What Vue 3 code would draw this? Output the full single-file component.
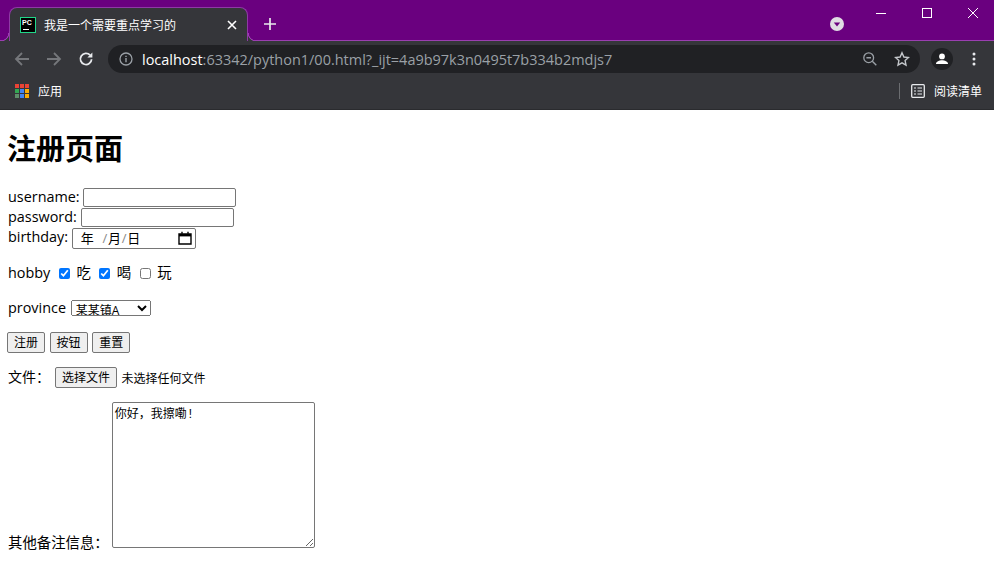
<script setup>
const apps = ['#ea4335', '#ea4335', '#ea4335', '#34a853', '#4285f4', '#fbac04', '#5f8f6a', '#4285f4', '#fbac04']
</script>

<template>
  <div class="browser">
    <header class="tabstrip">
      <div class="tab">
        <span class="favicon"><span class="pc">PC</span><i class="pc-bar"></i></span>
        <span class="tab-title">我是一个需要重点学习的</span>
        <svg class="tab-close" width="10" height="10" viewBox="0 0 10 10"><path d="M1 1l8 8M9 1l-8 8" stroke="#fff" stroke-width="1.6" /></svg>
      </div>
      <svg class="newtab" width="12" height="12" viewBox="0 0 12 12"><path d="M6 0v12M0 6h12" stroke="#e8eaed" stroke-width="1.7" /></svg>
      <svg class="tab-search" width="14" height="14" viewBox="0 0 14 14"><circle cx="7" cy="7" r="7" fill="#e0dce3" /><path d="M3.8 5.4h6.4L7 9.4z" fill="#6a007f" /></svg>
      <div class="win-controls">
        <svg width="46" height="30" viewBox="0 0 46 30"><path d="M20 13.5h10" stroke="#fff" /></svg>
        <svg width="46" height="30" viewBox="0 0 46 30"><rect x="20.5" y="8.5" width="9" height="9" fill="none" stroke="#fff" /></svg>
        <svg width="46" height="30" viewBox="0 0 46 30"><path d="M20 8l10 10M30 8l-10 10" stroke="#fff" /></svg>
      </div>
    </header>

    <div class="toolbar">
      <svg class="tool" width="16" height="16" viewBox="0 0 16 16"><path d="M15 8H2M8 2L2 8l6 6" fill="none" stroke="#75777b" stroke-width="1.8" /></svg>
      <svg class="tool" width="16" height="16" viewBox="0 0 16 16"><path d="M1 8h13M8 2l6 6-6 6" fill="none" stroke="#75777b" stroke-width="1.8" /></svg>
      <svg class="tool" width="16" height="16" viewBox="0 0 16 16"><path d="M13.6 8.2a5.6 5.6 0 1 1-1.5-4.1" fill="none" stroke="#e8eaed" stroke-width="1.8" /><path d="M14.4 1.4v5h-5z" fill="#e8eaed" /></svg>
      <div class="omnibox">
        <svg width="14" height="14" viewBox="0 0 14 14"><circle cx="7" cy="7" r="6" fill="none" stroke="#9aa0a6" stroke-width="1.3" /><path d="M7 6v4.2M7 3.7v1.4" stroke="#9aa0a6" stroke-width="1.4" /></svg>
        <span class="url"><b>localhost</b>:63342/python1/00.html?_ijt=4a9b97k3n0495t7b334b2mdjs7</span>
        <svg class="zoom-icon" width="14" height="14" viewBox="0 0 14 14"><circle cx="5.7" cy="5.7" r="4.9" fill="none" stroke="#9aa0a6" stroke-width="1.3" /><path d="M3.4 5.7h4.6M9.3 9.3l4 4" stroke="#9aa0a6" stroke-width="1.4" /></svg>
        <svg class="star" width="16" height="16" viewBox="0 0 16 16"><path d="M8 1.8l1.9 4.2 4.6.5-3.4 3.1.9 4.5L8 11.8l-4 2.3.9-4.5-3.4-3.1 4.6-.5z" fill="none" stroke="#c4c7cb" stroke-width="1.4" /></svg>
      </div>
      <svg class="avatar" width="22" height="22" viewBox="0 0 22 22"><circle cx="11" cy="11" r="11" fill="#202124" /><circle cx="11" cy="8.4" r="2.9" fill="#fff" /><path d="M5 16c0-2.6 3.4-3.7 6-3.7s6 1.1 6 3.7z" fill="#fff" /></svg>
      <svg class="menu" width="4" height="14" viewBox="0 0 4 14"><circle cx="2" cy="2" r="1.5" fill="#e8eaed" /><circle cx="2" cy="7" r="1.5" fill="#e8eaed" /><circle cx="2" cy="12" r="1.5" fill="#e8eaed" /></svg>
    </div>

    <div class="bookmarks">
      <span class="apps"><i v-for="(c, i) in apps" :key="i" :style="{ background: c }"></i></span>
      <span class="bm-label">应用</span>
      <span class="bm-sep"></span>
      <svg width="14" height="14" viewBox="0 0 14 14"><rect x=".7" y=".7" width="12.6" height="12.6" rx="1" fill="none" stroke="#e8eaed" stroke-width="1.3" /><path d="M3 4h2M3 7h2M3 10h2M6.5 4H11M6.5 7H11M6.5 10H11" stroke="#e8eaed" stroke-width="1.2" /></svg>
      <span class="bm-read">阅读清单</span>
    </div>
  </div>

  <main class="page">
    <h1>注册页面</h1>
    <form @submit.prevent>
      <div class="fields">
        username: <input type="text" class="text-in"><br>
        password: <input type="password" class="text-in"><br>
        birthday: <span class="date"><span class="date-y">年</span><span class="date-s">/</span>月<span class="date-s">/</span>日
          <svg class="cal" width="14" height="14" viewBox="0 0 14 14"><path d="M1 3h12v10H1z" fill="none" stroke="#000" stroke-width="1.4" /><path d="M1 3h12v2.4H1z" fill="#000" /><path d="M4 .8v2M10 .8v2" stroke="#000" stroke-width="1.4" /></svg>
        </span>
      </div>
      <p class="row">
        hobby
        <input type="checkbox" checked> 吃
        <input type="checkbox" checked> 喝
        <input type="checkbox"> 玩
      </p>
      <p class="row province">
        province
        <select class="sel"><option>某某镇A</option></select>
      </p>
      <p class="row buttons">
        <button type="button">注册</button>
        <button type="button">按钮</button>
        <button type="button">重置</button>
      </p>
      <p class="row file">
        <span class="file-label">文件：</span>
        <button type="button">选择文件</button>
        <span class="file-none">未选择任何文件</span>
      </p>
      <div class="notes">
        <span class="notes-label">其他备注信息：</span>
        <textarea class="ta">你好，我擦嘞!</textarea>
      </div>
    </form>
  </main>
</template>

<style scoped>
.browser {
  font-family: "Open Sans", "Noto Sans CJK SC", sans-serif;
}

.tabstrip {
  position: relative;
  display: flex;
  align-items: flex-end;
  height: 40px;
  padding-left: 9px;
  background: #6a007f;
  border-bottom: 1px solid #9a3fb0;
  box-sizing: content-box;
}

.tab {
  position: relative;
  display: flex;
  align-items: center;
  width: 239px;
  height: 34px;
  margin-bottom: -1px;
  padding: 0 10px;
  box-sizing: border-box;
  background: #35363a;
  border: 1px solid #8f3aa5;
  border-bottom: none;
  border-radius: 8px 8px 0 0;
}

.tab::before,
.tab::after {
  content: "";
  position: absolute;
  bottom: 0;
  width: 8px;
  height: 8px;
}

.tab::before {
  left: -9px;
  background: radial-gradient(circle at 0 0, #6a007f 7px, #9a3fb0 7.5px, #9a3fb0 8px, #35363a 8.6px);
}

.tab::after {
  right: -9px;
  background: radial-gradient(circle at 100% 0, #6a007f 7px, #9a3fb0 7.5px, #9a3fb0 8px, #35363a 8.6px);
}

.favicon {
  position: relative;
  display: flex;
  flex: none;
  width: 16px;
  height: 16px;
  box-sizing: border-box;
  border: 1px solid #21d789;
  background: #000;
}

.pc {
  font: bold 7px/9px "Liberation Sans", sans-serif;
  color: #fff;
  margin-left: 1px;
}

.pc-bar {
  position: absolute;
  left: 2px;
  bottom: 2px;
  width: 6px;
  height: 1px;
  background: #fff;
}

.tab-title {
  margin-left: 8px;
  font-size: 12px;
  color: #fff;
  white-space: nowrap;
}

.tab-close {
  margin-left: auto;
}

.newtab {
  margin: 0 0 10px 16px;
}

.tab-search {
  margin-left: auto;
  margin-right: 150px;
  margin-bottom: 9px;
}

.win-controls {
  position: absolute;
  top: 0;
  right: 0;
  display: flex;
}

.toolbar {
  display: flex;
  align-items: center;
  height: 36px;
  padding-left: 14px;
  box-sizing: border-box;
  background: #35363a;
}

.tool {
  margin-right: 16px;
}

.omnibox {
  display: flex;
  align-items: center;
  width: 812px;
  height: 28px;
  margin-left: -2px;
  padding: 0 10px 0 11px;
  box-sizing: border-box;
  background: #202124;
  border-radius: 14px;
  color: #9aa0a6;
}

.url {
  margin-left: 9px;
  font-size: 14.47px;
  white-space: nowrap;
}

.url b {
  font-weight: 400;
  color: #fff;
}

.zoom-icon {
  margin-left: auto;
  margin-right: 17px;
}

.avatar {
  margin-left: 11px;
}

.menu {
  margin-left: 19px;
}

.bookmarks {
  display: flex;
  align-items: center;
  height: 33px;
  padding: 0 12px 4px 15px;
  box-sizing: border-box;
  background: #35363a;
  border-bottom: 1px solid #2a2b2e;
  color: #fff;
}

.apps {
  display: grid;
  grid-template-columns: repeat(3, 4px);
  grid-auto-rows: 4px;
  gap: 1px;
}

.apps i {
  display: block;
}

.bm-label {
  margin-left: 9px;
  font-size: 12px;
}

.bm-sep {
  width: 1px;
  height: 16px;
  margin-left: auto;
  margin-right: 11px;
  background: #6b6d70;
}

.bm-read {
  margin-left: 9px;
  font-size: 12px;
}

.page {
  padding: 0 8px;
  font-family: "Open Sans", "Noto Sans CJK SC", sans-serif;
  font-size: 14.4px;
  color: #000;
}

h1 {
  margin: 19px 0 0 -1px;
  font-size: 29px;
  line-height: 40px;
  font-weight: 700;
}

.fields {
  margin-top: 18px;
  line-height: 20px;
}

.text-in {
  width: 153px;
  height: 19px;
  padding: 1px 2px;
  box-sizing: border-box;
  border: 1px solid #767676;
  border-radius: 2px;
  vertical-align: baseline;
}

.date {
  display: inline-flex;
  align-items: center;
  width: 124px;
  height: 21px;
  padding-left: 8px;
  box-sizing: border-box;
  border: 1px solid #767676;
  border-radius: 2px;
  font-size: 13px;
  vertical-align: middle;
}

.date-y {
  margin-right: 8px;
}

.date-s {
  margin: 0 0.7px;
  color: #888;
}

.cal {
  margin-left: auto;
  margin-right: 3px;
}

.row {
  margin: 14px 0;
  line-height: 20px;
}

.province {
  margin-top: 15px;
}

input[type="checkbox"] {
  width: 11px;
  height: 11px;
  margin: 0 3px 0 4.6px;
  vertical-align: -1px;
}

.sel {
  width: 80px;
  height: 16px;
  margin-left: 1px;
  font-size: 12px;
  font-family: "Open Sans", "Noto Sans CJK SC", sans-serif;
  padding: 0;
  vertical-align: -2px;
}

.buttons {
  margin-top: 13px;
  margin-left: -1px;
}

button {
  height: 21px;
  margin-right: 4.6px;
  padding: 0 6px;
  font-size: 12px;
  font-family: "Noto Sans CJK SC", sans-serif;
  line-height: 16px;
  border: 1px solid #767676;
  border-radius: 2px;
  background: #efefef;
}

.file {
  margin-top: 14px;
}

.file-label {
  font-size: 14px;
  margin-right: 5px;
}

.file-none {
  font-size: 12px;
}

.notes {
  margin-top: 14px;
}

.ta {
  width: 203px;
  height: 146px;
  padding: 1px 2px;
  box-sizing: border-box;
  margin-left: 3px;
  border: 1px solid #767676;
  border-radius: 2px;
  font-family: "Liberation Mono", "Noto Sans CJK SC", monospace;
  font-size: 12px;
  vertical-align: baseline;
}
</style>

<style>
body {
  background: #fff;
}
</style>
